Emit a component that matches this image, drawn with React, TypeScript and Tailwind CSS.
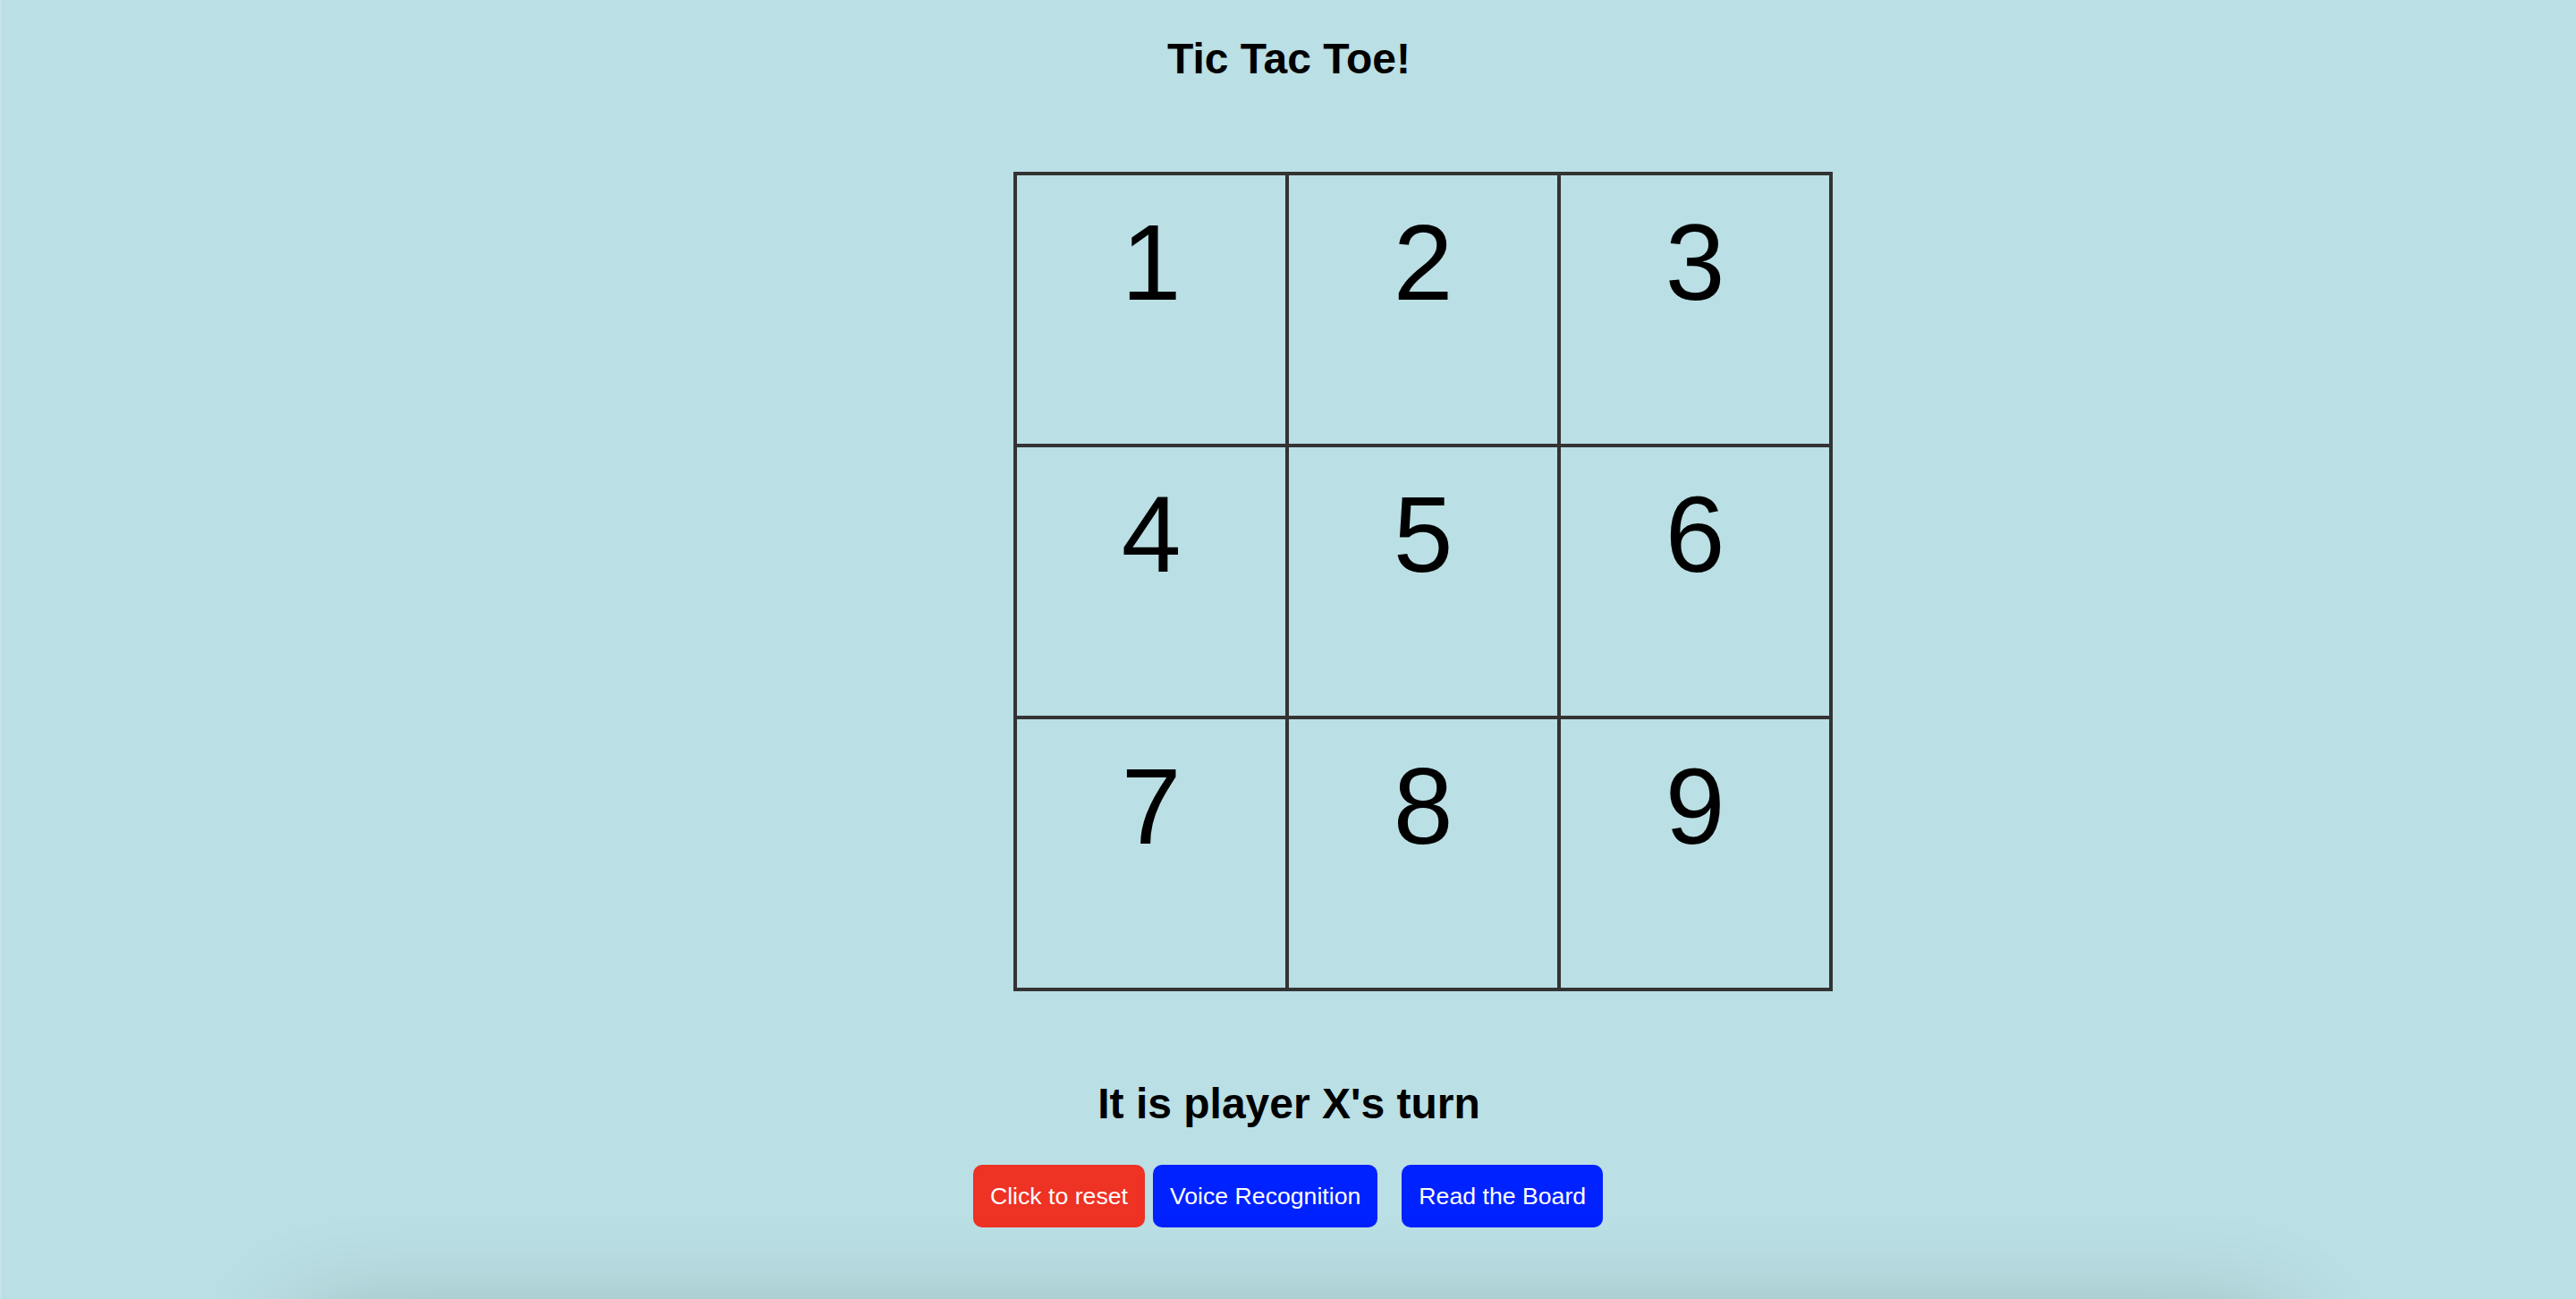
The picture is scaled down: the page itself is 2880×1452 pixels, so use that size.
const cells = ["1", "2", "3", "4", "5", "6", "7", "8", "9"];

/**
 * Tic Tac Toe board with turn status and control buttons.
 */
export default function App() {
  return (
    <div className="h-[1452px] overflow-hidden border-l-2 border-[#c6e4e9] bg-[#badfe4] font-['Liberation_Sans',Arial,sans-serif] text-black">
      <div className="flex flex-col items-center pt-[38px]">
        {/* Title */}
        <h2 className="text-[48px] font-bold leading-[55px]">Tic Tac Toe!</h2>

        {/* Board (sits right of centre, as in the original page) */}
        <div className="ml-[300px] mt-[99px] grid grid-cols-[repeat(3,300px)] gap-[4px] bg-[#333333] p-[4px]">
          {cells.map((n) => (
            <div
              key={n}
              className="h-[300px] bg-[#badfe4] pt-[28px] text-center text-[120px] leading-[138px]"
            >
              {n}
            </div>
          ))}
        </div>

        {/* Status */}
        <h2 className="mt-[98px] text-[48px] font-bold leading-[55px]">
          It is player X's turn
        </h2>

        {/* Actions */}
        <div className="-ml-[2px] mt-[41px] flex items-center">
          <button
            type="button"
            className="rounded-[10px] bg-[#ee3224] px-[19px] py-[20px] text-[26.67px] leading-[30px] text-white"
          >
            Click to reset
          </button>
          <button
            type="button"
            className="ml-[9px] rounded-[10px] bg-[#0022ff] px-[19px] py-[20px] text-[26.67px] leading-[30px] text-white"
          >
            Voice Recognition
          </button>
          <button
            type="button"
            className="ml-[27px] rounded-[10px] bg-[#0022ff] px-[19px] py-[20px] text-[26.67px] leading-[30px] text-white"
          >
            Read the Board
          </button>
        </div>

        {/* Card below the fold, only its shadow shows */}
        <div className="mt-[104px] h-[400px] w-[2220px] rounded-[24px] bg-[#badfe4] shadow-[0_0_120px_rgba(0,0,0,0.2)]" />
      </div>
    </div>
  );
}
